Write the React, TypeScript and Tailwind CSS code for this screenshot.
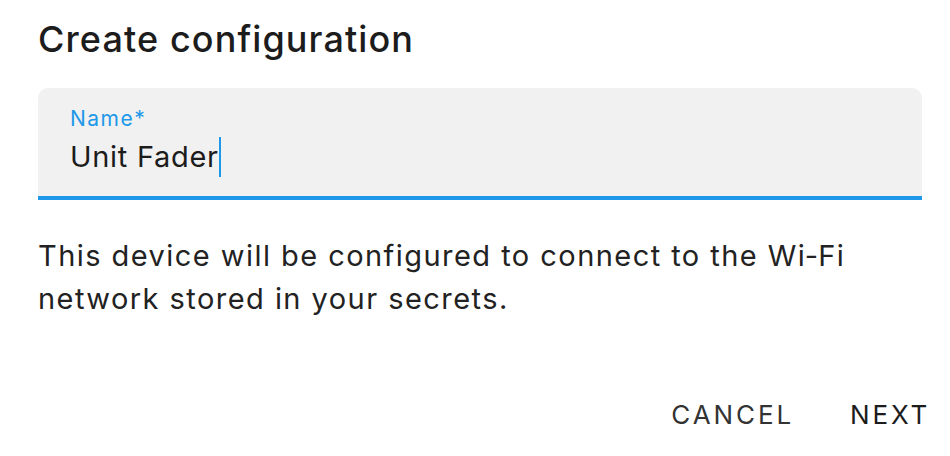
export default function App() {
    return <div className="w-[950px] h-[456px] bg-white text-[#212121] font-['Inter',_Arial,_sans-serif] overflow-hidden">
        <div className="flex flex-col pl-[38px] pr-[28px] pt-[17px]">
            <h2 className="text-[36px] leading-[44px] font-medium tracking-[1.1px] text-[#1c1c1c]">Create configuration</h2>
            <div className="mt-[27px] h-[112px] rounded-t-[10px] bg-[#f1f1f1] border-b-4 border-[#1e98e8] pl-[32px] pt-[19px]">
                <div className="text-[21px] leading-[24px] tracking-[1.5px] text-[#1e98e8]">Name*</div>
                <div className="mt-[6px] flex items-center text-[29px] leading-[40px] tracking-[0.7px] text-[#1c1c1c]">
                    <span>Unit Fader</span>
                    <span className="w-[2px] h-[40px] bg-[#1e98e8]" />
                </div>
            </div>
            <p className="mt-[34px] text-[29px] leading-[43px] tracking-[1.45px] text-[#222]">
                This device will be configured to connect to the Wi‑Fi network stored in your secrets.
            </p>
        </div>
        <div className="flex justify-end gap-[24px] pr-[4px] mt-[75px]">
            <button className="px-[16px] text-[26px] leading-[40px] tracking-[2.9px] text-[#333]">CANCEL</button>
            <button className="px-[16px] text-[26px] leading-[40px] tracking-[2.8px] text-[#1c1c1c]">NEXT</button>
        </div>
    </div>
}
